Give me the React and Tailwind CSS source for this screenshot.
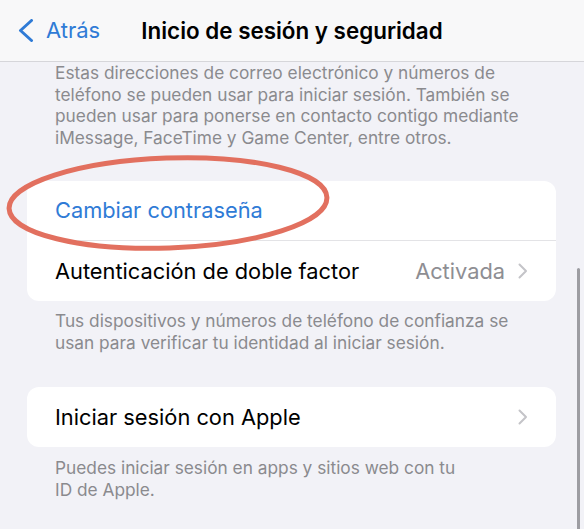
const font = { fontFamily: "Inter, 'Noto Sans', sans-serif" };

function Chevron() {
  return (
    <svg width="10" height="16" viewBox="0 0 10 16" className="shrink-0">
      <polyline
        points="1.5,1.5 8,8 1.5,14.5"
        fill="none"
        stroke="#c4c4c8"
        strokeWidth="2"
        strokeLinecap="round"
        strokeLinejoin="round"
      />
    </svg>
  );
}

function Footer({ children, className = "" }) {
  return (
    <p className={`pl-[55px] pr-[40px] text-[17.3px] leading-[21.5px] text-[#8a8a8e] ${className}`}>
      {children}
    </p>
  );
}

function Row({ label, value, chevron }) {
  return (
    <div className="flex h-[60px] items-center pl-[28px] pr-[28px]">
      <span className="flex-1 text-[21.8px] text-black">{label}</span>
      {value && <span className="mr-[13px] text-[21.8px] text-[#8e8e93]">{value}</span>}
      {chevron && <Chevron />}
    </div>
  );
}

export default function App() {
  return (
    <div className="relative h-[529px] w-[584px] overflow-hidden bg-[#f2f2f7]" style={font}>
      <header className="relative flex h-[62px] items-center border-b border-[#d6d6da] bg-[#f8f8f9]">
        <button className="ml-[18px] flex items-center text-[#2f7bd6]">
          <svg width="16" height="23" viewBox="0 0 16 23">
            <polyline
              points="13.5,1.5 2.5,11.5 13.5,21.5"
              fill="none"
              stroke="currentColor"
              strokeWidth="3"
              strokeLinecap="round"
              strokeLinejoin="round"
            />
          </svg>
          <span className="ml-[12px] text-[22px]">Atrás</span>
        </button>
        <h1 className="pointer-events-none absolute left-0 right-0 text-center text-[22.4px] font-semibold text-black">
          Inicio de sesión y seguridad
        </h1>
      </header>

      <Footer>
        Estas direcciones de correo electrónico y números de teléfono se pueden usar para iniciar
        sesión. También se pueden usar para ponerse en contacto contigo mediante iMessage, FaceTime
        y Game Center, entre otros.
      </Footer>

      <div className="mx-[27px] mr-[28px] mt-[33px] overflow-hidden rounded-[12px] bg-white">
        <div className="flex h-[59px] items-center pl-[28px]">
          <span className="text-[21.8px] text-[#2f7bd6]">Cambiar contraseña</span>
        </div>
        <div className="ml-[28px] border-t border-[#e3e3e6]" />
        <Row label="Autenticación de doble factor" value="Activada" chevron />
      </div>

      <Footer className="pt-[9px]">
        Tus dispositivos y números de teléfono de confianza se usan para verificar tu identidad al
        iniciar sesión.
      </Footer>

      <div className="mx-[27px] mr-[28px] mt-[34px] rounded-[12px] bg-white">
        <Row label="Iniciar sesión con Apple" chevron />
      </div>

      <Footer className="pt-[10px]">
        {"Puedes iniciar sesión en apps y sitios web con tu ID\u00a0de\u00a0Apple."}
      </Footer>

      {/* hand-drawn highlight around the password row */}
      <svg
        className="pointer-events-none absolute left-0 top-[150px]"
        width="340"
        height="110"
        viewBox="0 0 340 110"
      >
        <ellipse
          cx="168"
          cy="53"
          rx="159"
          ry="45"
          fill="none"
          stroke="#e2705f"
          strokeWidth="5"
          transform="rotate(-2 168 53)"
        />
      </svg>

      {/* scroll indicator */}
      <div className="absolute right-[4px] top-[268px] h-[280px] w-[3px] rounded-full bg-[#9d9da2]" />
    </div>
  );
}
